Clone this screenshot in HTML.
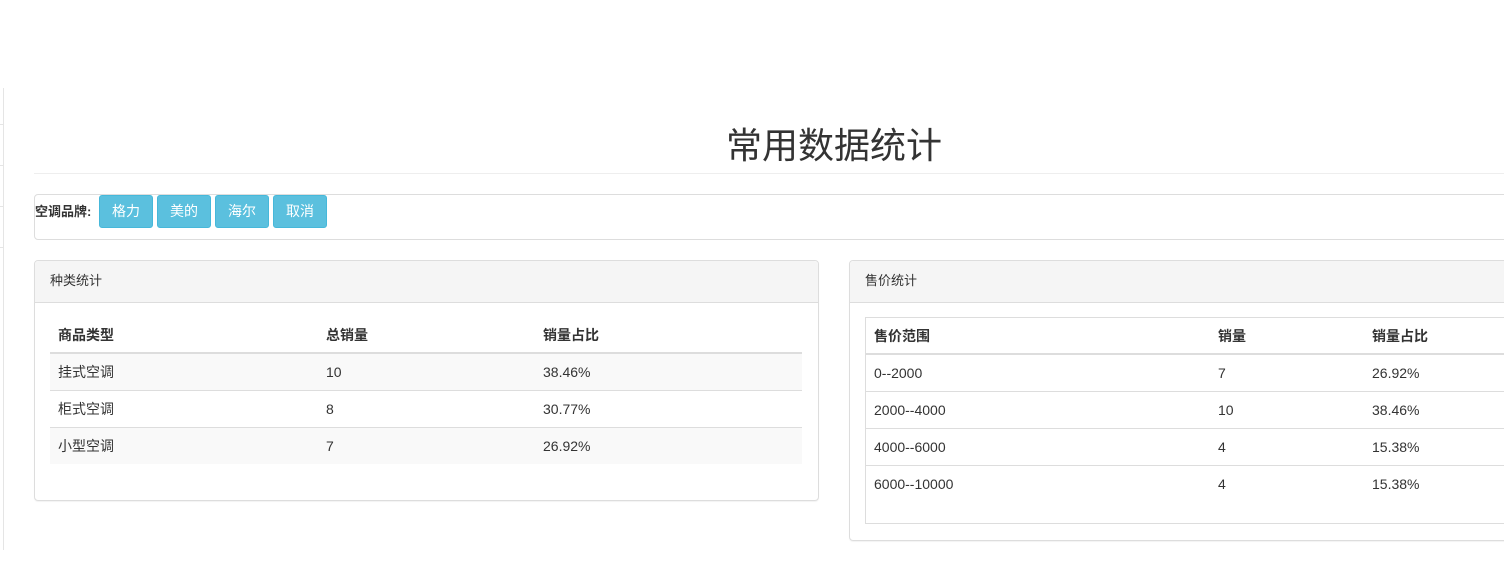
<!DOCTYPE html>
<html><head><meta charset="utf-8"><style>
body{margin:0;width:1504px;height:566px;overflow:hidden;background:#fff;font-family:"Liberation Sans","Noto Sans CJK SC",sans-serif;font-size:14px;color:#333;position:relative}
.a{position:absolute}
.btn{position:absolute;top:195px;width:54px;height:33px;background:#5bc0de;border:1px solid #46b8da;border-radius:3px;box-sizing:border-box;color:#fff;font-size:14px;line-height:31px;text-align:center}
table{border-collapse:collapse;position:absolute}
td,th{text-align:left;padding:0 8px;height:36px;font-size:14px}
th{font-weight:bold;border-bottom:2px solid #ddd;height:35px}
td{border-top:1px solid #ddd}
.s tr:nth-child(even) td{background:#f9f9f9}
.panel{position:absolute;border:1px solid #ddd;border-radius:4px;box-sizing:border-box;box-shadow:0 1px 1px rgba(0,0,0,.05)}
.ph{height:41px;background:#f5f5f5;border-bottom:1px solid #ddd;line-height:40px;padding-left:15px;font-size:13px;border-radius:4px 4px 0 0}
</style></head><body>
<div class="a" style="left:3px;top:88px;width:1px;height:462px;background:#e5e5e5"></div>
<div class="a" style="left:0;top:124px;width:4px;height:1px;background:#e5e5e5"></div>
<div class="a" style="left:0;top:165px;width:4px;height:1px;background:#e5e5e5"></div>
<div class="a" style="left:0;top:206px;width:4px;height:1px;background:#e5e5e5"></div>
<div class="a" style="left:0;top:247px;width:4px;height:1px;background:#e5e5e5"></div>
<div class="a" style="left:34px;top:120px;width:1600px;text-align:center;font-size:36px;line-height:52px;color:#333">常用数据统计</div>
<div class="a" style="left:34px;top:173px;width:1480px;height:1px;background:#eee"></div>
<div class="a" style="left:34px;top:194px;width:1480px;height:46px;border:1px solid #ddd;border-radius:4px;box-sizing:border-box"></div>
<div class="a" style="left:35px;top:201px;font-weight:bold;font-size:13px">空调品牌:</div>
<div class="btn" style="left:99px">格力</div>
<div class="btn" style="left:157px">美的</div>
<div class="btn" style="left:215px">海尔</div>
<div class="btn" style="left:273px">取消</div>
<div class="panel" style="left:34px;top:260px;width:785px;height:241px"><div class="ph">种类统计</div></div>
<table class="s" style="left:50px;top:317px;width:752px">
<tr><th style="width:252px">商品类型</th><th style="width:201px">总销量</th><th>销量占比</th></tr>
<tr><td>挂式空调</td><td>10</td><td>38.46%</td></tr>
<tr><td>柜式空调</td><td>8</td><td>30.77%</td></tr>
<tr><td>小型空调</td><td>7</td><td>26.92%</td></tr>
</table>
<div class="panel" style="left:849px;top:260px;width:700px;height:281px"><div class="ph">售价统计</div></div>
<div class="a" style="left:865px;top:317px;width:700px;height:207px;border:1px solid #ddd;box-sizing:border-box"></div>
<table style="left:866px;top:318px;width:700px">
<tr><th style="width:328px">售价范围</th><th style="width:138px">销量</th><th>销量占比</th></tr>
<tr><td style="border-top:0">0--2000</td><td style="border-top:0">7</td><td style="border-top:0">26.92%</td></tr>
<tr><td>2000--4000</td><td>10</td><td>38.46%</td></tr>
<tr><td>4000--6000</td><td>4</td><td>15.38%</td></tr>
<tr><td>6000--10000</td><td>4</td><td>15.38%</td></tr>
</table>
</body></html>
